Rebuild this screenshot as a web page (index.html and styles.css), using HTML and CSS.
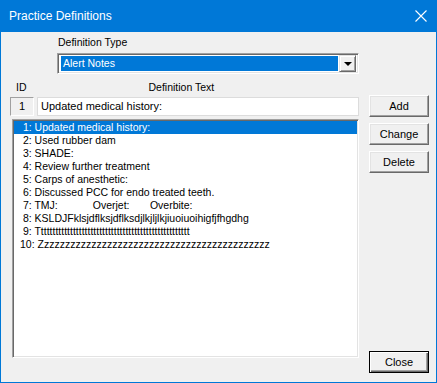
FILE: index.html
```html
<!DOCTYPE html>
<html>
<head>
    <meta charset="utf-8"/>
    <title>Practice Definitions</title>
    <link rel="stylesheet" href="styles.css">
</head>
<body>
<div class="window">
    <div class="titlebar">
        <span class="title">Practice Definitions</span>
        <svg class="close-x" width="12" height="12" viewBox="0 0 12 12">
            <path d="M0.5 0.5 L11.5 11.5 M11.5 0.5 L0.5 11.5" stroke="#fff" stroke-width="1.1" fill="none"/>
        </svg>
    </div>
    <div class="content">
        <div class="main">
            <div class="type-label">Definition Type</div>
            <div class="combo">
                <div class="combo-value">Alert Notes</div>
                <div class="combo-btn"><i class="arrow-down"></i></div>
            </div>
            <div class="heads">
                <span class="head-id">ID</span>
                <span class="head-text">Definition Text</span>
            </div>
            <div class="fields">
                <div class="id-box">1</div>
                <div class="text-box">Updated medical history:</div>
            </div>
            <div class="list">
                <div class="item selected"> 1: Updated medical history:</div>
                <div class="item"> 2: Used rubber dam</div>
                <div class="item"> 3: SHADE:</div>
                <div class="item"> 4: Review further treatment</div>
                <div class="item"> 5: Carps of anesthetic:</div>
                <div class="item"> 6: Discussed PCC for endo treated teeth.</div>
                <div class="item"> 7: TMJ:            Overjet:       Overbite:</div>
                <div class="item"> 8: KSLDJFklsjdflksjdflksdjlkjljlkjiuoiuoihigfjfhgdhg</div>
                <div class="item"> 9: Tttttttttttttttttttttttttttttttttttttttttttttttttttt</div>
                <div class="item">10: Zzzzzzzzzzzzzzzzzzzzzzzzzzzzzzzzzzzzzzzzzzzz</div>
            </div>
        </div>
        <div class="side">
            <div class="btn">Add</div>
            <div class="btn">Change</div>
            <div class="btn">Delete</div>
            <div class="btn btn-default">Close</div>
        </div>
    </div>
</div>
</body>
</html>
```
FILE: styles.css
```css
html, body {
    margin: 0;
    padding: 0;
    background: #f0f0f0;
}

.window {
    width: 437px;
    height: 383px;
    box-sizing: border-box;
    border: 1px solid #0078d7;
    border-top: none;
    background: #f0f0f0;
    display: flex;
    flex-direction: column;
    font-family: "Liberation Sans", Arial, sans-serif;
    font-size: 10.5px;
    color: #000;
}

.titlebar {
    height: 31px;
    margin: 0 -1px;
    background: #0078d7;
    display: flex;
    align-items: center;
    justify-content: space-between;
    padding: 0 10px 1px 9px;
}

.title {
    font-family: "Liberation Sans", Arial, sans-serif;
    font-size: 12px;
    color: #fff;
}

.close-x {
    display: block;
    margin-top: 0;
}

.content {
    flex: 1;
    display: flex;
}

.main {
    width: 349px;
    margin-left: 9px;
    padding-top: 4px;
}

.type-label {
    margin-left: 48px;
    line-height: 13px;
}

.combo {
    margin: 4px 0 0 47px;
    width: 302px;
    height: 21px;
    box-sizing: border-box;
    border: 1px solid;
    border-color: #a0a0a0 #fff #fff #a0a0a0;
    box-shadow: inset 1px 1px #696969, inset -1px -1px #e3e3e3;
    background: #fff;
    display: flex;
    padding: 2px 2px 2px 3px;
}

.combo-value {
    flex: 1;
    background: #0078d7;
    color: #fff;
    line-height: 15px;
    padding-left: 2px;
    margin-right: 1px;
}

.combo-btn {
    width: 17px;
    box-sizing: border-box;
    margin: -1px 0;
    background: #f0f0f0;
    border: 1px solid;
    border-color: #e3e3e3 #696969 #696969 #e3e3e3;
    box-shadow: inset 1px 1px #fff, inset -1px -1px #a0a0a0;
    display: flex;
    align-items: center;
    justify-content: center;
}

.arrow-down {
    width: 0;
    height: 0;
    border-top: 4px solid #000;
    border-left: 4px solid transparent;
    border-right: 4px solid transparent;
    margin-top: 1px;
}

.heads {
    margin-top: 7px;
    line-height: 13px;
    display: flex;
}

.head-id {
    margin-left: 6px;
}

.head-text {
    margin-left: 122px;
}

.fields {
    margin-top: 3px;
    display: flex;
}

.id-box {
    width: 24px;
    height: 19px;
    box-sizing: border-box;
    border: 1px solid;
    border-color: #a0a0a0 #fff #fff #a0a0a0;
    background: #f0f0f0;
    text-align: center;
    line-height: 17px;
    font-size: 11px;
}

.text-box {
    margin-left: 3px;
    width: 322px;
    height: 19px;
    box-sizing: border-box;
    border: 1px solid #dcdcdc;
    background: #fff;
    line-height: 17px;
    padding-left: 3px;
    font-size: 11px;
}

.list {
    margin: 3px 0 0 2px;
    width: 347px;
    height: 239px;
    box-sizing: border-box;
    border: 1px solid;
    border-color: #a0a0a0 #fff #fff #a0a0a0;
    box-shadow: inset 1px 1px #696969, inset -1px -1px #e3e3e3;
    background: #fff;
    padding: 1px 1px 0 1px;
}

.item {
    height: 13px;
    line-height: 13px;
    white-space: pre;
    padding-left: 6px;
}

.item.selected {
    background: #0078d7;
    color: #fff;
}

.side {
    width: 60px;
    margin-left: 10px;
    padding: 63px 0 9px;
    display: flex;
    flex-direction: column;
    gap: 6px;
}

.btn {
    height: 22px;
    box-sizing: border-box;
    border: 1px solid;
    border-color: #fff #696969 #696969 #fff;
    box-shadow: inset -1px -1px #a0a0a0, inset 1px 1px #e3e3e3;
    background: #f0f0f0;
    text-align: center;
    line-height: 20px;
    font-size: 11px;
}

.btn-default {
    margin-top: auto;
    border-color: #000;
    box-shadow: inset 1px 1px #fff, inset -1px -1px #696969, inset -2px -2px #a0a0a0;
}
```
